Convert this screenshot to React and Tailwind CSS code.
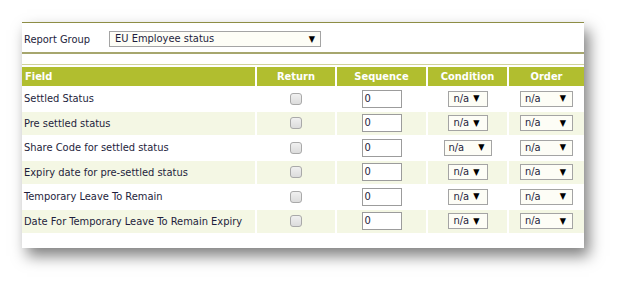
import React from "react";

const rows = [
  { label: "Settled Status", wide: false },
  { label: "Pre settled status", wide: false },
  { label: "Share Code for settled status", wide: true },
  { label: "Expiry date for pre-settled status", wide: false },
  { label: "Temporary Leave To Remain", wide: false },
  { label: "Date For Temporary Leave To Remain Expiry", wide: false },
];

const cols = "grid grid-cols-[233px_78px_89px_79px_75px] gap-x-[2px]";

function Arrow() {
  return <span className="text-[9px] leading-none text-black -mt-px">▼</span>;
}

export default function App() {
  return (
    <div className="w-[635px] h-[283px] bg-white font-['DejaVu_Sans_Condensed','Noto_Sans',sans-serif] text-[11px] text-[#1e1e3c] pt-[22px] pl-[22px]">
      <div className="w-[562px] h-[226px] bg-white border-t border-[#8d8d45] shadow-[5px_8px_14px_rgba(0,0,0,0.5)]">
        {/* Report group */}
        <div className="flex items-center h-[29px] pl-[2px] pt-[3px]">
          <span className="w-[85px] pt-[2px]">Report Group</span>
          <div className="w-[212px] h-[16px] border border-[#a4a4a4] bg-[#fdfdf6] flex items-center justify-between pl-[5px] pr-[5px] pt-px">
            <span>EU Employee status</span>
            <Arrow />
          </div>
        </div>
        <div className="h-[2px] bg-[#a6a66e]" />
        <div className="h-[10px]" />
        <div className="h-px bg-[#cfd39a]" />
        <div className="h-px" />

        {/* Table header */}
        <div className={`${cols} h-[20px] text-white font-bold pt-px`}>
          <div className="bg-[#b1be2f] flex items-center pl-[3px] pt-px">Field</div>
          <div className="bg-[#b1be2f] flex items-center justify-center pt-px">Return</div>
          <div className="bg-[#b1be2f] flex items-center justify-center pt-px">Sequence</div>
          <div className="bg-[#b1be2f] flex items-center justify-center pt-px">Condition</div>
          <div className="bg-[#b1be2f] flex items-center justify-center pt-px">Order</div>
        </div>

        <div className="flex flex-col gap-y-[1.5px] mt-px">
          {rows.map((r, i) => {
            const bg = i % 2 === 1 ? "bg-[#f4f7e4]" : "bg-white";
            return (
              <div key={r.label} className={`${cols} h-[23px]`}>
                <div className={`${bg} flex items-center pl-[2px] pt-[2px]`}>{r.label}</div>
                <div className={`${bg} flex items-center justify-center`}>
                  <div className="w-[12px] h-[12px] rounded-[3px] border border-[#a9a9a9] bg-gradient-to-b from-[#f0f0f0] to-[#dcdcdc]" />
                </div>
                <div className={`${bg} flex items-center justify-center`}>
                  <div className="w-[40px] h-[18px] border border-[#9c9c9c] bg-white flex items-center pl-[2px] pt-px">0</div>
                </div>
                <div className={`${bg} flex items-center justify-center`}>
                  {r.wide ? (
                    <div className="w-[48px] h-[16px] border border-[#a4a4a4] bg-[#fdfdf6] flex items-center justify-between pl-[4px] pr-[6px] pt-px">
                      <span>n/a</span>
                      <Arrow />
                    </div>
                  ) : (
                    <div className="w-[40px] h-[16px] border border-[#a4a4a4] bg-[#fdfdf6] flex items-center gap-[4px] pl-[5px] pt-px">
                      <span>n/a</span>
                      <Arrow />
                    </div>
                  )}
                </div>
                <div className={`${bg} flex items-center justify-center`}>
                  <div className="w-[53px] h-[16px] border border-[#a4a4a4] bg-[#fdfdf6] flex items-center justify-between pl-[4px] pr-[6px] pt-px">
                    <span>n/a</span>
                    <Arrow />
                  </div>
                </div>
              </div>
            );
          })}
        </div>
      </div>
    </div>
  );
}
